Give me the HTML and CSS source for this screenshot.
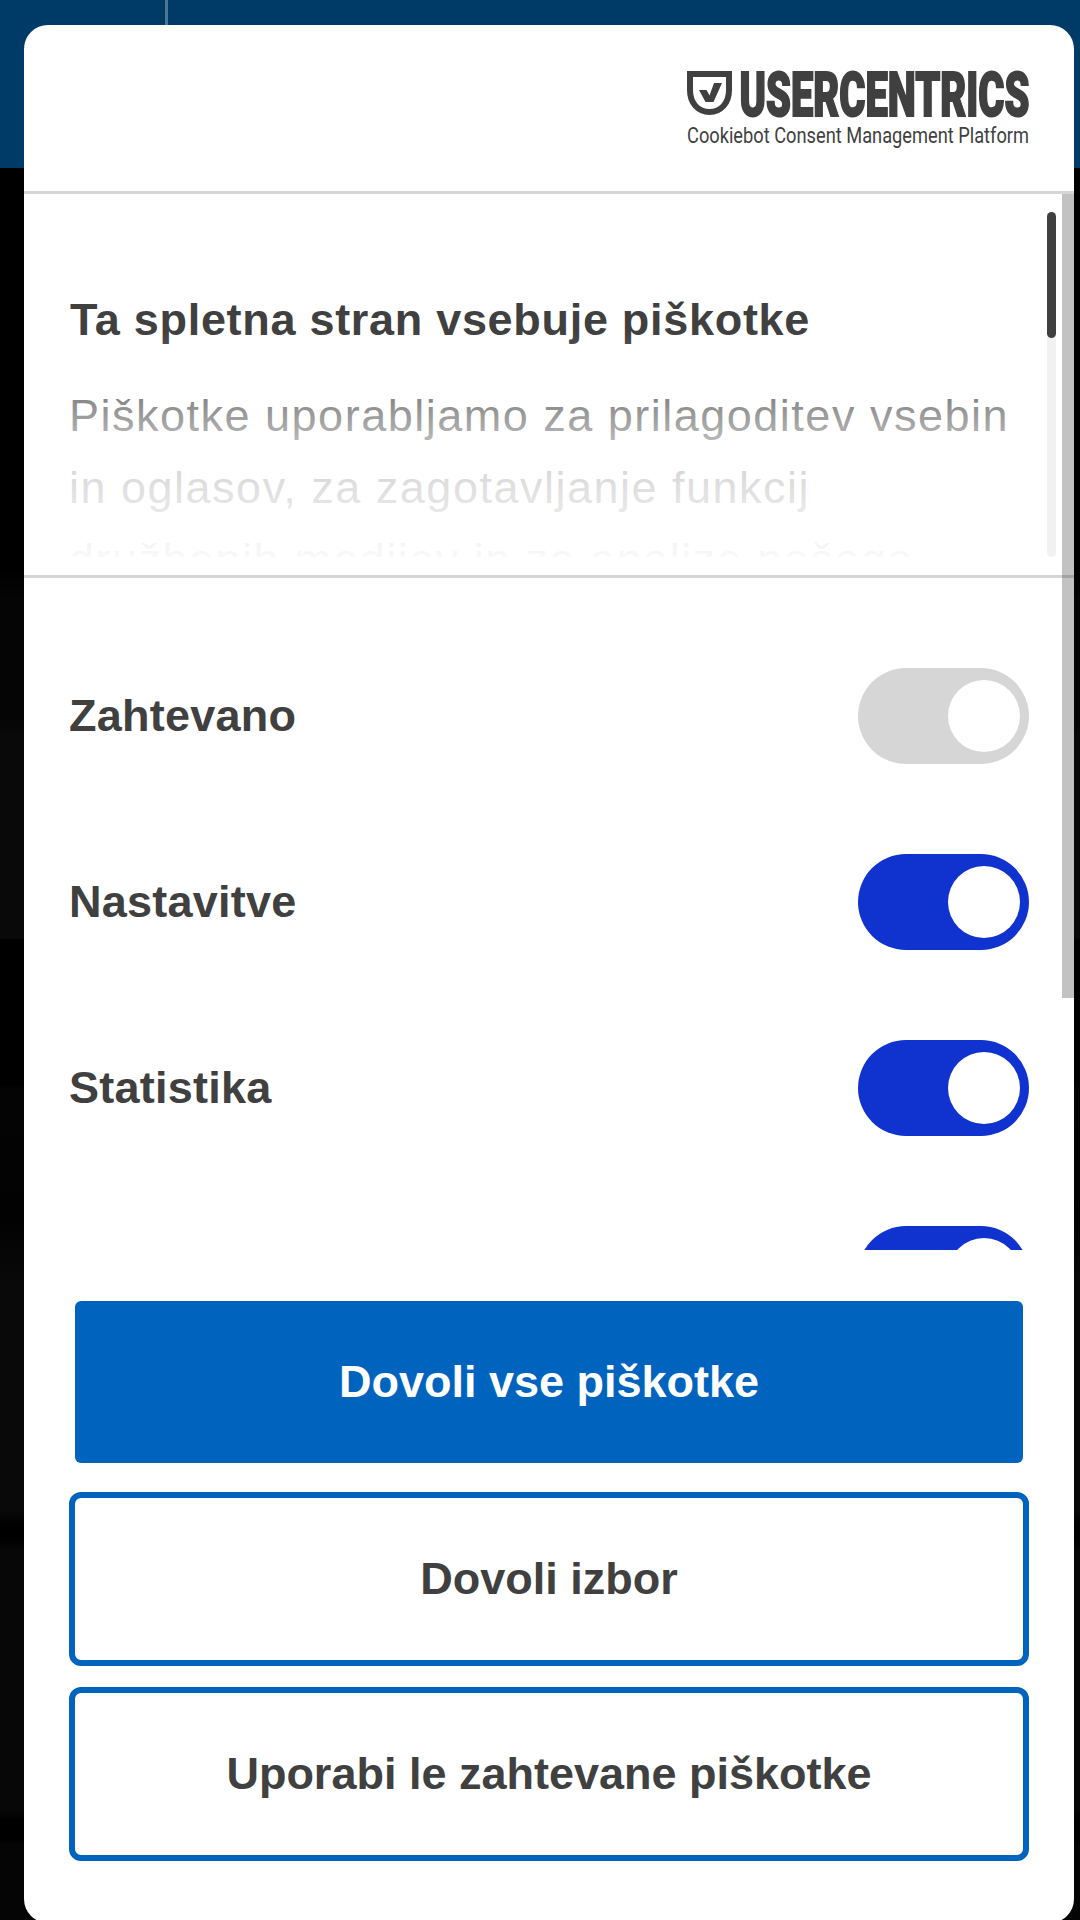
FILE: index.html
```
<!DOCTYPE html>
<html lang="sl">
<head>
  <meta charset="UTF-8" />
  <meta name="viewport" content="width=device-width, initial-scale=1" />
  <title>Piškotki</title>
  <link rel="stylesheet" href="styles.css">
</head>
<body>

  <div class="dialog">
    <div class="header">
      <svg class="logo" width="344" height="84" viewBox="0 0 344 84">
        <path class="shield" d="M4 7H43V23C43 36 35 45 23.500 45C12 45 4 36 4 23Z" />
        <path class="check" d="M13 23H20.500L23.500 28.500L28 16H36L27.500 35H19.500Z" />
        <text class="brand" x="53.500" y="48.500" textLength="290" lengthAdjust="spacingAndGlyphs">USERCENTRICS</text>
        <text class="subtitle" x="1" y="76" textLength="342" lengthAdjust="spacingAndGlyphs">Cookiebot Consent Management Platform</text>
      </svg>
    </div>

    <div class="content">
      <div class="intro">
        <div class="intro-text">
          <h2>Ta spletna stran vsebuje piškotke</h2>
          <p>Piškotke uporabljamo za prilagoditev vsebin in oglasov, za zagotavljanje funkcij družbenih medijev in za analize našega</p>
        </div>
        <div class="track"><div class="thumb"></div></div>
      </div>

      <div class="row">
        <span>Zahtevano</span>
        <div class="toggle disabled"></div>
      </div>
      <div class="row">
        <span>Nastavitve</span>
        <div class="toggle"></div>
      </div>
      <div class="row">
        <span>Statistika</span>
        <div class="toggle"></div>
      </div>
      <div class="row">
        <div class="toggle"></div>
      </div>
      <div class="scrollbar"></div>
    </div>

    <div class="footer">
      <button class="btn btn-primary">Dovoli vse piškotke</button>
      <button class="btn">Dovoli izbor</button>
      <button class="btn">Uporabi le zahtevane piškotke</button>
    </div>
  </div>

</body>
</html>
```

FILE: styles.css
```
* {
  box-sizing: border-box;
  margin: 0;
  padding: 0;
}

body {
  height: 1920px;
  overflow: hidden;
  padding: 25px 6px 0 24px;
  font-family: "Liberation Sans", Arial, sans-serif;
  color: #404040;
  background:
    linear-gradient(#4a7698, #4a7698) 165px 0 / 3px 25px no-repeat,
    linear-gradient(#003a66, #003a66) 0 0 / 100% 168px no-repeat,
    linear-gradient(#000 570px, #050505 600px, #050505 725px, #090909 735px, #090909 938px, #000 940px, #000 1085px, #040404 1090px, #020202 1220px, #090909 1280px, #090909 1510px, #000 1525px, #000 1540px, #070707 1550px, #070707 1810px, #000 1820px, #000 1838px, #050505 1845px);
}

.dialog {
  height: 1898px;
  background: #fff;
  border-radius: 24px;
}

.header {
  height: 169px;
  display: flex;
  justify-content: flex-end;
  padding: 42px 44px 0 0;
  border-bottom: 3px solid #d6d6d6;
}

.logo {
  overflow: visible;
}

.shield {
  fill: none;
  stroke: #404040;
  stroke-width: 6;
}

.check {
  fill: #404040;
}

.brand {
  font-family: Roboto, sans-serif;
  font-size: 61px;
  font-weight: 900;
  fill: #404040;
  stroke: #404040;
  stroke-width: 2;
}

.subtitle {
  font-family: Roboto, sans-serif;
  font-size: 22px;
  fill: #404040;
}

.content {
  position: relative;
  height: 1056px;
  overflow: hidden;
}

.intro {
  height: 384px;
  display: flex;
  justify-content: space-between;
  padding: 18px 18px 0 45px;
  border-bottom: 3px solid #d6d6d6;
}

.intro-text {
  position: relative;
  width: 954px;
  height: 345px;
  padding-top: 72px;
  overflow: hidden;
}

/* fades the text out towards the bottom */
.intro-text::after {
  content: "";
  position: absolute;
  left: 0;
  right: 0;
  bottom: 0;
  height: 225px;
  background: linear-gradient(rgba(255, 255, 255, 0), rgba(255, 255, 255, 0.38) 68px, rgba(255, 255, 255, 0.57) 98px, rgba(255, 255, 255, 0.8) 138px, rgba(255, 255, 255, 0.88) 178px, rgba(255, 255, 255, 0.97));
}

h2 {
  padding-left: 1px;
  font-size: 45px;
  line-height: 72px;
  letter-spacing: 0.7px;
}

p {
  margin-top: 24px;
  font-size: 45px;
  line-height: 72px;
  letter-spacing: 1.5px;
}

.track {
  width: 9px;
  height: 345px;
  border-radius: 5px;
  background: #f1f1f1;
}

.thumb {
  height: 126px;
  border-radius: 5px;
  background: #404040;
}

.row {
  height: 186px;
  display: flex;
  align-items: center;
  justify-content: space-between;
  padding: 0 45px;
  font-size: 45px;
  font-weight: bold;
  letter-spacing: 0.25px;
}

.intro + .row {
  margin-top: 45px;
}

.toggle {
  width: 171px;
  height: 96px;
  margin-left: auto;
  padding: 12px 9px 12px 90px;
  border-radius: 48px;
  background: #1032cf;
}

.toggle::before {
  content: "";
  display: block;
  width: 72px;
  height: 72px;
  border-radius: 50%;
  background: #fff;
}

.toggle.disabled {
  background: #d6d6d6;
}

.scrollbar {
  position: absolute;
  top: 0;
  right: 0;
  width: 12px;
  height: 804px;
  background: rgba(0, 0, 0, 0.24);
}

.footer {
  display: flex;
  flex-direction: column;
  gap: 21px;
  padding: 45px 45px 0;
}

.btn {
  height: 174px;
  border: 6px solid #0064be;
  border-radius: 12px;
  background: #fff;
  color: #404040;
  font-family: inherit;
  font-size: 45px;
  font-weight: bold;
}

.btn-primary {
  margin-bottom: 2px;
  border-color: transparent;
  background: #0064be;
  background-clip: padding-box;
  color: #fff;
}
```
